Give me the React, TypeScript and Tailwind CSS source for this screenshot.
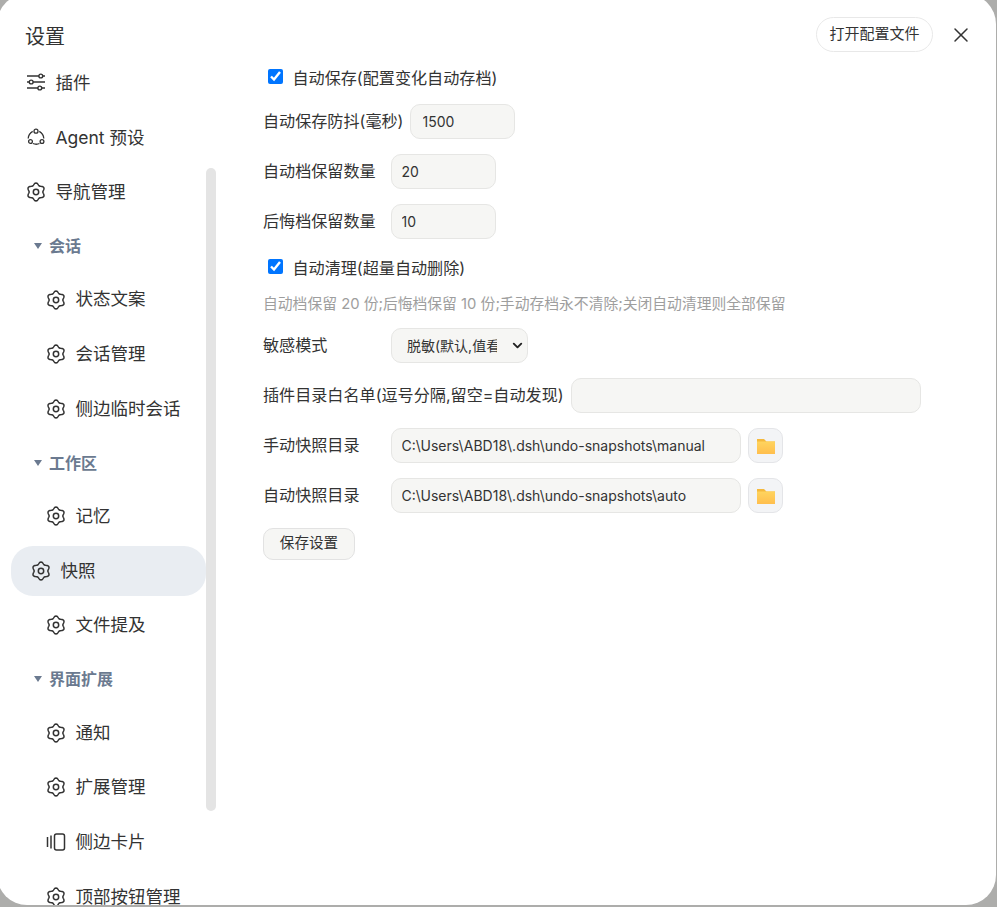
import React from "react";
import { ChevronDown, X } from "lucide-react";

// six soft lobes, one pointing up
const gearPath = (() => {
  let d = "";
  for (let i = 0; i < 72; i++) {
    const t = (i * 5 * Math.PI) / 180;
    const r = 7.9 + 1.05 * Math.cos(6 * t);
    const x = 10 + r * Math.sin(t);
    const y = 10 - r * Math.cos(t);
    d += `${i === 0 ? "M" : "L"}${x.toFixed(2)} ${y.toFixed(2)}`;
  }
  return d + "Z";
})();

const GearIcon = () => (
  <svg width="20" height="20" viewBox="0 0 20 20" fill="none" stroke="#333" strokeWidth="1.5" className="shrink-0">
    <path d={gearPath} strokeLinejoin="round" />
    <circle cx="10" cy="10" r="2.7" />
  </svg>
);

const SlidersIcon = () => (
  <svg width="20" height="20" viewBox="0 0 20 20" fill="none" stroke="#333" strokeWidth="1.4" className="shrink-0 -translate-y-px">
    <path d="M1 4h12M16.500 4H19M1 10h2.500M7 10h12M1 16h11M15.500 16H19" />
    <circle cx="14.800" cy="4" r="1.900" />
    <circle cx="5.200" cy="10" r="1.900" />
    <circle cx="13.800" cy="16" r="1.900" />
  </svg>
);

const AgentIcon = () => (
  <svg width="20" height="20" viewBox="0 0 20 20" fill="none" stroke="#333" strokeWidth="1.3" className="shrink-0">
    <circle cx="10" cy="3.200" r="2" />
    <circle cx="4.500" cy="13.500" r="1.900" />
    <circle cx="16" cy="13.500" r="1.900" />
    <path d="M6.700 3.400C4 5 2.400 7.500 2.200 10.500M13.300 3.400c2.700 1.600 4.300 4.100 4.500 7.100M7 15.500c2.200 1 4.300 1 6.500 0" />
  </svg>
);

const CardsIcon = () => (
  <svg width="20" height="20" viewBox="0 0 20 20" fill="none" stroke="#333" strokeWidth="1.5" className="shrink-0">
    <rect x="8.500" y="2" width="10" height="16" rx="2" />
    <path d="M1.500 5v10M5 3.500v13" />
  </svg>
);

const FolderIcon = () => (
  <svg width="18" height="16" viewBox="0 0 18 16" className="shrink-0">
    <defs>
      <linearGradient id="folderFill" x1="0" y1="0" x2="0" y2="1">
        <stop offset="0" stopColor="#ffd45e" />
        <stop offset="1" stopColor="#ffbe4d" />
      </linearGradient>
    </defs>
    <path d="M0 1h7l2.500 2.500H18V5H0Z" fill="#f5b93d" />
    <rect x="0" y="3.500" width="18" height="12.500" fill="url(#folderFill)" />
  </svg>
);

type Item = { label: string; icon?: "gear" | "sliders" | "agent" | "cards"; head?: boolean; nested?: boolean; active?: boolean };

const navItems: Item[] = [
  { label: "插件", icon: "sliders" },
  { label: "Agent 预设", icon: "agent" },
  { label: "导航管理", icon: "gear" },
  { label: "会话", head: true },
  { label: "状态文案", icon: "gear", nested: true },
  { label: "会话管理", icon: "gear", nested: true },
  { label: "侧边临时会话", icon: "gear", nested: true },
  { label: "工作区", head: true },
  { label: "记忆", icon: "gear", nested: true },
  { label: "快照", icon: "gear", active: true },
  { label: "文件提及", icon: "gear", nested: true },
  { label: "界面扩展", head: true },
  { label: "通知", icon: "gear", nested: true },
  { label: "扩展管理", icon: "gear", nested: true },
  { label: "侧边卡片", icon: "cards", nested: true },
  { label: "顶部按钮管理", icon: "gear", nested: true },
];

const NavIcon = ({ name }: { name: Item["icon"] }) => {
  if (name === "sliders") return <SlidersIcon />;
  if (name === "agent") return <AgentIcon />;
  if (name === "cards") return <CardsIcon />;
  return <GearIcon />;
};

const NavRow = ({ item }: { item: Item }) => {
  if (item.head) {
    return (
      <div className="flex h-[47.800px] items-center gap-[7px] pl-[34px] text-[16px] font-bold text-[#6b7a90]">
        <span className="h-0 w-0 border-x-[4px] border-t-[6px] border-x-transparent border-t-[#6b7a90]" />
        {item.label}
      </div>
    );
  }
  if (item.active) {
    return (
      <div className="ml-[11px] flex h-[50px] w-[195px] items-center gap-[9.500px] rounded-[22px] bg-[#e9edf2] pl-[20px] text-[17.500px] text-[#333]">
        <NavIcon name={item.icon} />
        {item.label}
      </div>
    );
  }
  return (
    <div
      className={
        item.nested
          ? "flex h-[50px] items-center gap-[9.500px] pl-[46px] text-[17.500px] text-[#333]"
          : "flex h-[50px] items-center gap-[9.500px] pl-[26px] text-[17.500px] text-[#333]"
      }
    >
      <NavIcon name={item.icon} />
      {item.label}
    </div>
  );
};

const fieldClass =
  "h-[35px] rounded-[10px] border border-[#e6e6e4] bg-[#f6f6f4] px-[9.500px] text-[14px] text-[#333] outline-none";

const labelClass = "text-[16.100px] text-[#333]";

const FolderButton = () => (
  <button className="flex h-[35px] w-[35px] items-center justify-center rounded-[10px] border border-[#e4e5e8] bg-[#f3f4f6]">
    <FolderIcon />
  </button>
);

export default function App() {
  return (
    <div className="h-[907px] w-[997px] overflow-hidden bg-[#adadab] font-['Inter','Noto_Sans_CJK_SC',sans-serif]">
      <div className="-mt-[6px] -ml-[3px] flex h-[911px] w-[999px] flex-col overflow-hidden rounded-[30px] bg-white">
        <div className="flex h-[62px] shrink-0 items-end justify-between pr-[23px] pl-[29px]">
          <span className="mb-[4px] -ml-[1px] text-[20px] text-[#333]">设置</span>
          <div className="mb-[4px] flex items-center gap-[16px]">
            <button className="h-[35px] w-[117px] rounded-full border border-[#e8e8e8] bg-white text-[15px] text-[#333]">
              打开配置文件
            </button>
            <X size={24} strokeWidth={1.5} color="#333" />
          </div>
        </div>
        <div className="relative flex min-h-0 flex-1 pl-[3px]">
          <div className="w-[217px] shrink-0 overflow-hidden pt-[2px]">
            <div className="flex flex-col gap-[4.700px]">
              {navItems.map((item) => (
                <NavRow key={item.label} item={item} />
              ))}
            </div>
          </div>
          <div className="absolute top-[112px] left-[209px] h-[643px] w-[10px] rounded-full bg-[#e4e4e4]" />
          <div className="flex flex-1 flex-col items-start pt-[9px] pl-[46px]">
            <label className={`flex h-[27px] items-center gap-[9.500px] pl-[5px] ${labelClass}`}>
              <input type="checkbox" defaultChecked className="h-[15px] w-[15px] -translate-y-[2px]" />
              自动保存(配置变化自动存档)
            </label>
            <div className="mt-[11.500px] flex items-center">
              <span className={`w-[147px] ${labelClass}`}>自动保存防抖(毫秒)</span>
              <input readOnly value="1500" className={`${fieldClass} w-[105px] pl-[11.500px]`} />
            </div>
            <div className="mt-[15px] flex items-center">
              <span className={`w-[128px] ${labelClass}`}>自动档保留数量</span>
              <input readOnly value="20" className={`${fieldClass} w-[105px]`} />
            </div>
            <div className="mt-[15px] flex items-center">
              <span className={`w-[128px] ${labelClass}`}>后悔档保留数量</span>
              <input readOnly value="10" className={`${fieldClass} w-[105px]`} />
            </div>
            <label className={`mt-[16.500px] flex h-[27px] items-center gap-[9.500px] pl-[5px] ${labelClass}`}>
              <input type="checkbox" defaultChecked className="h-[15px] w-[15px] -translate-y-[2px]" />
              自动清理(超量自动删除)
            </label>
            <p className="mt-[12px] text-[14.800px] leading-[20px] text-[#9e9e9e]">
              自动档保留 20 份;后悔档保留 10 份;手动存档永不清除;关闭自动清理则全部保留
            </p>
            <div className="mt-[14px] flex items-center">
              <span className={`w-[128px] ${labelClass}`}>敏感模式</span>
              <div className="relative">
                <select defaultValue="mask" className={`${fieldClass} block w-[137px] appearance-none pr-[30px] pl-[15px]`}>
                  <option value="mask">脱敏(默认,值看不到)</option>
                  <option value="off">关闭</option>
                </select>
                <ChevronDown size={15} strokeWidth={3} color="#222" className="pointer-events-none absolute top-[10px] right-[3px]" />
              </div>
            </div>
            <div className="mt-[15px] flex items-center">
              <span className={`w-[308px] ${labelClass}`}>插件目录白名单(逗号分隔,留空=自动发现)</span>
              <input readOnly value="" className={`${fieldClass} w-[350px]`} />
            </div>
            <div className="mt-[15px] flex items-center gap-[7px]">
              <span className={`w-[121px] ${labelClass}`}>手动快照目录</span>
              <input readOnly value="C:\Users\ABD18\.dsh\undo-snapshots\manual" className={`${fieldClass} w-[350px]`} />
              <FolderButton />
            </div>
            <div className="mt-[15px] flex items-center gap-[7px]">
              <span className={`w-[121px] ${labelClass}`}>自动快照目录</span>
              <input readOnly value="C:\Users\ABD18\.dsh\undo-snapshots\auto" className={`${fieldClass} w-[350px]`} />
              <FolderButton />
            </div>
            <button className="mt-[15px] h-[32px] w-[92px] rounded-[10px] border border-[#e2e2e2] bg-[#f6f6f4] text-[14.600px] text-[#333]">
              保存设置
            </button>
          </div>
        </div>
      </div>
    </div>
  );
}
